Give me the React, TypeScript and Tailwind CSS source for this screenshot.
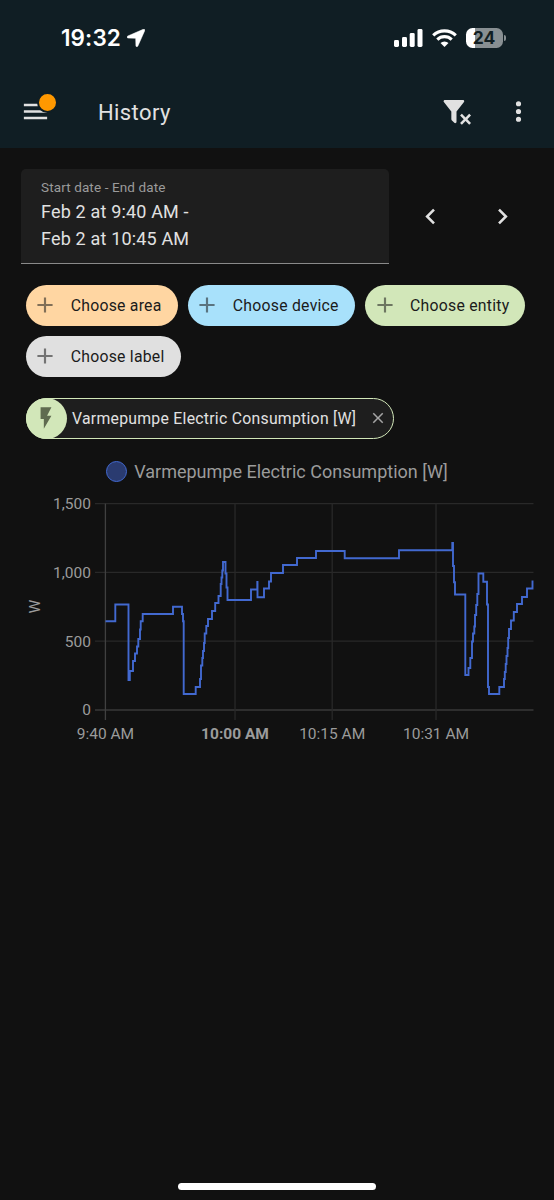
import React from 'react';

const ICONS = {
  filterRemove:
    'M14.76,20.83L17.6,18L14.76,15.17L16.17,13.76L19,16.57L21.83,13.76L23.24,15.17L20.43,18L23.24,20.83L21.83,22.24L19,19.4L16.17,22.24L14.76,20.83M12,12V19.88C12.04,20.18 11.94,20.5 11.71,20.71C11.32,21.1 10.69,21.1 10.3,20.71L8.29,18.7C8.06,18.47 7.96,18.16 8,17.87V12H7.97L2.21,4.62C1.87,4.19 1.95,3.56 2.38,3.22C2.57,3.08 2.78,3 3,3V3H17V3C17.22,3 17.43,3.08 17.62,3.22C18.05,3.56 18.13,4.19 17.79,4.62L12.03,12H12Z',
  dots: 'M12,16A2,2 0 0,1 14,18A2,2 0 0,1 12,20A2,2 0 0,1 10,18A2,2 0 0,1 12,16M12,10A2,2 0 0,1 14,12A2,2 0 0,1 12,14A2,2 0 0,1 10,12A2,2 0 0,1 12,10M12,4A2,2 0 0,1 14,6A2,2 0 0,1 12,8A2,2 0 0,1 10,6A2,2 0 0,1 12,4Z',
  menu: 'M3,6H21V8H3V6M3,11H21V13H3V11M3,16H21V18H3V16Z',
  left: 'M15.41,16.58L10.83,12L15.41,7.41L14,6L8,12L14,18L15.41,16.58Z',
  right: 'M8.59,16.58L13.17,12L8.59,7.41L10,6L16,12L10,18L8.59,16.58Z',
  plus: 'M19,13H13V19H11V13H5V11H11V5H13V11H19V13Z',
  flash: 'M7,2V13H10V22L17,10H13L17,2H7Z',
  close:
    'M19,6.41L17.59,5L12,10.59L6.41,5L5,6.41L10.59,12L5,17.59L6.41,19L12,13.41L17.59,19L19,17.59L13.41,12L19,6.41Z',
};

const Icon: React.FC<{ path: string; className?: string }> = ({ path, className = '' }) => (
  <svg viewBox="0 0 24 24" fill="currentColor" className={`shrink-0 ${className}`}>
    <path d={path} />
  </svg>
);

const StatusBar: React.FC = () => (
  <div className="flex h-[75px] items-center pl-[61px] pr-[48.5px] text-white">
    <span className="pt-px font-['Inter',sans-serif] text-[22.5px] font-semibold leading-none tracking-[0.1px]">19:32</span>
    <svg viewBox="0 0 18 18" className="ml-[6px] h-[18px] w-[18px]" fill="currentColor">
      <path d="M16.3 0.3C17.5-.2 18.2 .5 17.7 1.7L10.9 17C10.4 18.2 8.9 18 8.9 16.7L8.7 9.9Q8.7 9.3 8.1 9.3L1.2 9.1C-.1 9.1-.3 7.5.8 7Z" stroke="currentColor" strokeWidth="0.5" />
    </svg>
    <svg viewBox="0 0 29 18" className="ml-auto h-[18px] w-[29px]" fill="currentColor">
      <rect x="0" y="11" width="5" height="7" rx="1.4" />
      <rect x="8" y="8" width="5" height="10" rx="1.4" />
      <rect x="15.7" y="4" width="5" height="14" rx="1.4" />
      <rect x="23.5" y="0" width="5" height="18" rx="1.4" />
    </svg>
    <svg viewBox="0 0 25 18" className="ml-[9px] h-[18px] w-[25px]">
      <g fill="none" stroke="currentColor" strokeWidth="3.1">
        <path d="M1.2 6.4A16.3 16.3 0 0 1 23.8 6.4" />
        <path d="M5.3 10.6A10.3 10.3 0 0 1 19.7 10.6" />
      </g>
      <path d="M8.5 14A5.8 5.8 0 0 1 16.5 14L12.5 18Z" fill="currentColor" />
    </svg>
    <div className="ml-[9px] flex items-center">
      <div className="flex h-[20px] w-[37px] items-center justify-center rounded-[6.5px] bg-[linear-gradient(90deg,#fff_24%,#888f92_24%)] font-['Inter',sans-serif] text-[17.5px] font-bold leading-none text-[#111e22]">
        24
      </div>
      <div className="ml-px h-[6px] w-[2px] rounded-r-full bg-[#888f92]" />
    </div>
  </div>
);

const Chip: React.FC<{ label: string; color: string }> = ({ label, color }) => (
  <button className={`flex h-[41px] items-center rounded-full pl-[6.5px] pr-[16px] text-[#1b1b1b] ${color}`}>
    <Icon path={ICONS.plus} className="h-[26px] w-[26px] opacity-55" />
    <span className="ml-[12.5px] pt-px text-[15.8px] tracking-[0.24px]">{label}</span>
  </button>
);

// [x, y]: the line moves across to x, then up or down to y
const STEPS: [number, number][] = [
  [115.3, 604.5], [128.5, 680], [129.8, 671], [133, 661], [135, 653.5], [137, 646.5], [138.3, 639],
  [140, 629.5], [140.7, 621.3], [142.7, 614], [173, 606.7], [182, 614], [183, 621.3], [183.7, 694],
  [195.7, 687], [200, 679], [201, 665.5], [202.3, 658], [203, 651], [204, 643], [204.7, 633.5],
  [206.3, 626], [208, 619], [212, 611], [215.2, 603], [218.5, 596], [220.7, 584], [221.5, 577.5],
  [222.3, 570.5], [223, 562], [225.5, 573.5], [226.5, 587.5], [227.5, 600], [251, 589.5],
  [257.3, 582], [257.5, 597.3], [264, 588.5], [269, 581.5], [271, 573], [283, 565], [297, 558],
  [316, 551], [344.7, 558.2], [399, 550.3], [452.3, 543], [453, 566], [454, 582.3], [455, 594.5],
  [465.3, 675], [468.5, 668], [470.3, 658], [472, 641.5], [473, 633.5], [474.3, 626.5], [475, 615],
  [476.2, 605], [477.3, 594], [478.5, 573.5], [483.3, 581.7], [487, 604.5], [488, 687], [489, 694],
  [499.3, 687], [504, 679], [504.8, 672], [505.7, 664], [506.5, 656], [507.5, 648], [508.2, 638],
  [509, 629], [511, 620.5], [513.8, 612], [517, 604], [522, 597], [527, 588.5], [532.5, 580.5],
];
const LINE = 'M105.5 621.3' + STEPS.map(([x, y]) => `H${x}V${y}`).join('');

const yTicks = [
  { label: '1,500', y: 503.6 },
  { label: '1,000', y: 572.4 },
  { label: '500', y: 641.2 },
  { label: '0', y: 710 },
];
const xTicks = [
  { label: '9:40 AM', x: 105.4 },
  { label: '10:00 AM', x: 235, bold: true },
  { label: '10:15 AM', x: 332.2 },
  { label: '10:31 AM', x: 436 },
];

const Chart: React.FC = () => (
  <svg viewBox="0 490 554 260" className="block h-[260px] w-full" fontSize="15.5" fill="#9b9b9b">
    {yTicks.map((t) => (
      <g key={t.label}>
        <line x1="95" x2="533.5" y1={t.y} y2={t.y} stroke={t.y === 710 ? '#383838' : '#292929'} strokeWidth="1.3" />
        <text x="91" y={t.y + 5.4} textAnchor="end">{t.label}</text>
      </g>
    ))}
    {xTicks.map((t, i) => (
      <g key={t.label}>
        <line x1={t.x} x2={t.x} y1="503.6" y2="720" stroke={i === 0 ? '#404040' : '#292929'} strokeWidth="1.3" />
        <text x={t.x} y="739" textAnchor="middle" fontWeight={t.bold ? 700 : 400}>{t.label}</text>
      </g>
    ))}
    <text transform="translate(40 606.5) rotate(-90)" textAnchor="middle">W</text>
    <path d={LINE} fill="none" stroke="#4269d0" strokeWidth="1.9" />
  </svg>
);

const App: React.FC = () => {
  return (
    <div className="flex h-[1200px] w-[554px] flex-col overflow-hidden bg-[#111111] font-['Roboto',sans-serif] text-[#e1e1e1]">
      <header className="h-[148px] shrink-0 bg-[#101e24]">
        <StatusBar />
        <div className="flex h-[73px] items-center pl-[20.3px] pr-[20.5px]">
          <div className="relative">
            <Icon path={ICONS.menu} className="h-[31px] w-[31px]" />
            <span className="absolute left-[17px] top-[-4px] h-[21px] w-[21px] rounded-full border-[2.5px] border-[#101e24] bg-[#ff9800]" />
          </div>
          <h1 className="ml-[46.7px] pt-[2px] text-[22px] leading-none tracking-[0.4px]">History</h1>
          <Icon path={ICONS.filterRemove} className="ml-auto h-[31px] w-[31px]" />
          <Icon path={ICONS.dots} className="ml-[31px] h-[31px] w-[31px]" />
        </div>
      </header>

      <div className="mt-[21px] flex items-center pl-[20.5px]">
        <div className="h-[95px] w-[368.5px] rounded-t-[5px] border-b-[1.5px] border-[#8a8a8a] bg-[#1e1e1e] pl-[20.5px] pt-[9px]">
          <div className="text-[13.5px] leading-[19px] tracking-[0.12px] text-[#9b9b9b]">Start date - End date</div>
          <div className="pt-px text-[18px] leading-[27px] tracking-[0.17px]">
            Feb 2 at 9:40 AM -<br />
            Feb 2 at 10:45 AM
          </div>
        </div>
        <Icon path={ICONS.left} className="ml-[26px] h-[31px] w-[31px]" />
        <Icon path={ICONS.right} className="ml-[41px] h-[31px] w-[31px]" />
      </div>

      <div className="mt-[20.5px] flex flex-wrap gap-[10.3px] pl-[25.7px]">
        <Chip label="Choose area" color="bg-[#ffd6a2]" />
        <Chip label="Choose device" color="bg-[#a8e1fb]" />
        <Chip label="Choose entity" color="bg-[#d2e7b9]" />
        <Chip label="Choose label" color="bg-[#e0e0e0]" />
      </div>

      <div className="ml-[25.7px] mt-[21px] flex h-[41px] w-[368.3px] items-center rounded-full border border-[#d2e7b9] bg-[#1e1e1e]">
        <div className="-ml-px flex h-[41px] w-[41px] shrink-0 items-center justify-center rounded-full bg-[#d2e7b9]">
          <Icon path={ICONS.flash} className="h-[26px] w-[26px] text-[#5f6b50]" />
        </div>
        <span className="ml-[5.3px] whitespace-nowrap pt-[2px] text-[15.8px] tracking-[0.26px]">Varmepumpe Electric Consumption [W]</span>
        <Icon path={ICONS.close} className="ml-auto mr-[6px] h-[18px] w-[18px] text-[#a5a5a5]" />
      </div>

      <div className="mt-[19px] flex h-[27px] items-center pl-[105.5px] text-[18px] text-[#9b9b9b]">
        <span className="mr-[7.7px] mt-px h-[21px] w-[21px] rounded-full border-[1.5px] border-[#4269d0] bg-[#2a3b70]" />
        Varmepumpe Electric Consumption [W]
      </div>
      <div className="mt-[5px]">
        <Chart />
      </div>

      <div className="mx-auto mb-[10.5px] mt-auto h-[6.5px] w-[198px] shrink-0 rounded-full bg-white" />
    </div>
  );
};

export default App;
